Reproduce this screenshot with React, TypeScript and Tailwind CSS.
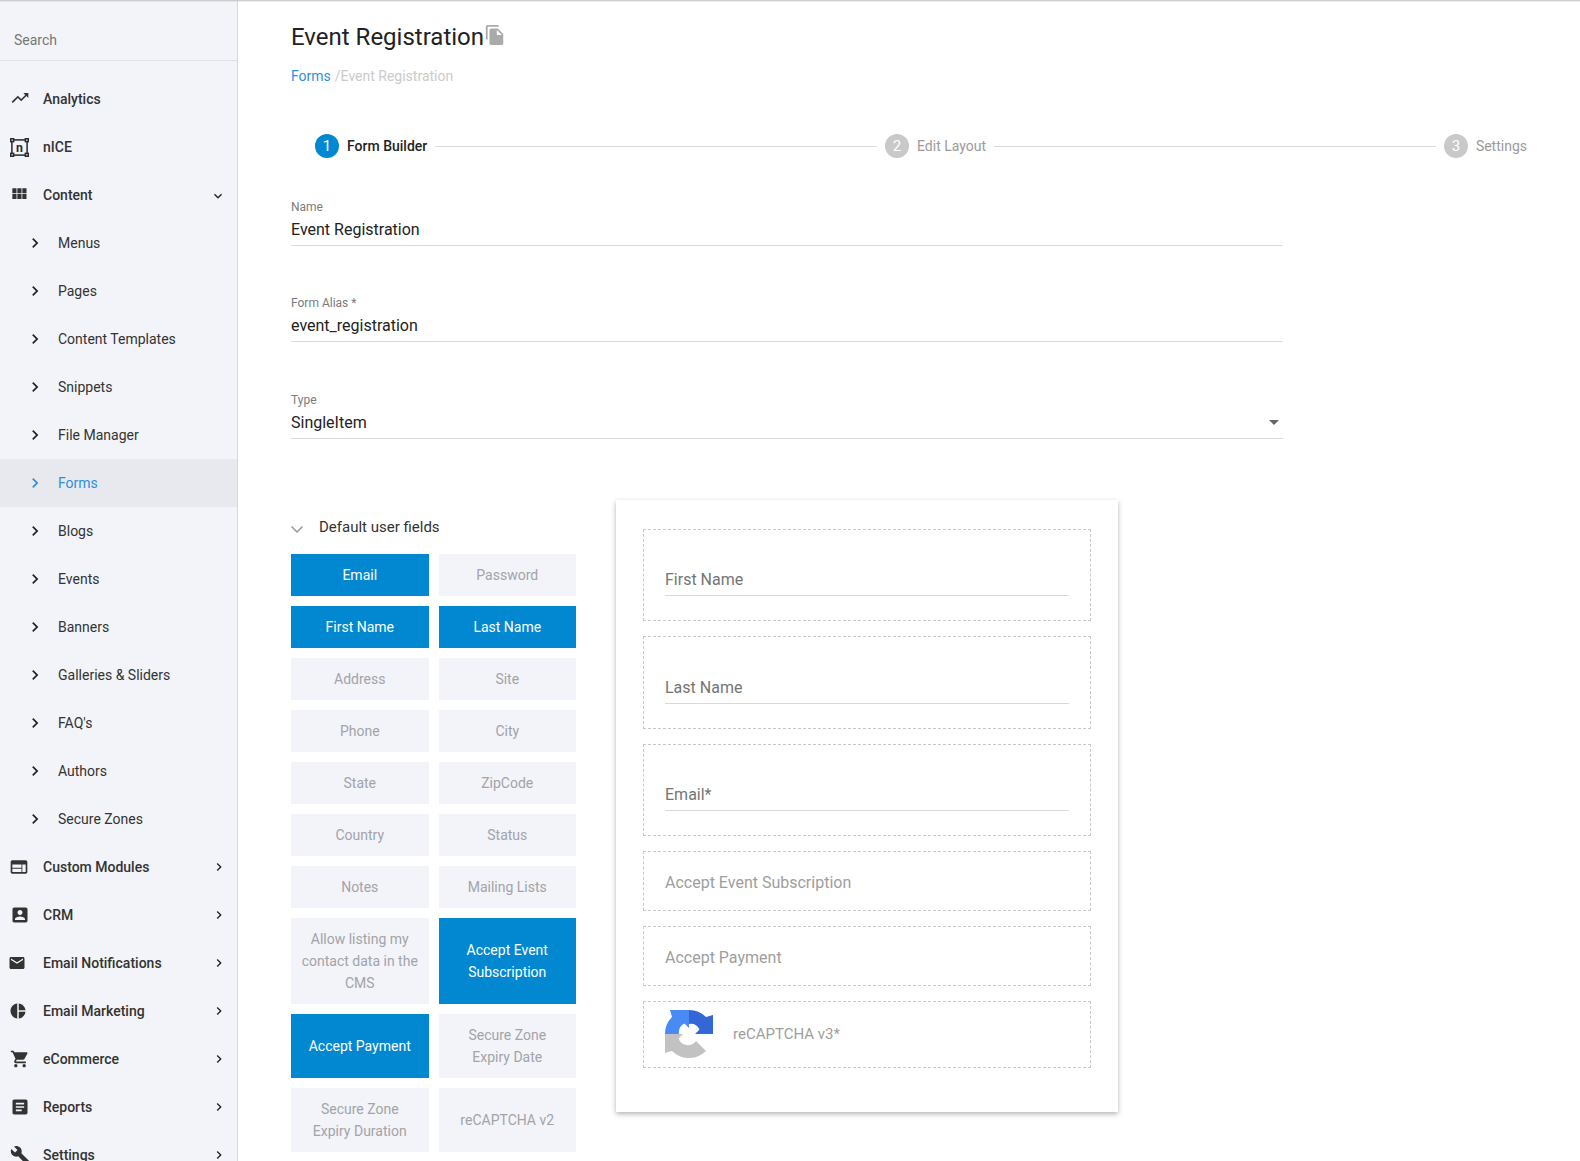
import type { ReactNode } from "react";

const chevronRight = "M10 6L8.59 7.41 13.17 12l-4.58 4.59L10 18l6-6z";
const expandMore = "M16.59 8.59L12 13.17 7.41 8.59 6 10l6 6 6-6z";

function Icon({ d, className }: { d: string; className?: string }) {
  return (
    <svg viewBox="0 0 24 24" fill="currentColor" className={className}>
      <path d={d} />
    </svg>
  );
}

function NiceIcon() {
  return (
    <svg viewBox="0 0 20 20" className="ml-[10px] mr-[14px] size-[19px] shrink-0 text-[#2b2b2b]">
      <rect x="2" y="2" width="16" height="16" fill="none" stroke="currentColor" strokeWidth="1.6" />
      <rect x="0.8" y="0.8" width="3" height="3" fill="#f2f4f9" stroke="currentColor" strokeWidth="1.6" />
      <rect x="16.2" y="0.8" width="3" height="3" fill="#f2f4f9" stroke="currentColor" strokeWidth="1.6" />
      <rect x="0.8" y="16.2" width="3" height="3" fill="#f2f4f9" stroke="currentColor" strokeWidth="1.6" />
      <rect x="16.2" y="16.2" width="3" height="3" fill="#f2f4f9" stroke="currentColor" strokeWidth="1.6" />
      <text x="10" y="14.5" textAnchor="middle" fontSize="13" fontWeight="700" fill="currentColor" fontFamily="Roboto, sans-serif">
        n
      </text>
    </svg>
  );
}

function MainItem({ icon, label, open, leaf }: { icon: ReactNode; label: string; open?: boolean; leaf?: boolean }) {
  return (
    <div className="flex h-12 items-center text-[14px] font-medium text-[#333]">
      {icon}
      <span className="flex-1">{label}</span>
      {!leaf &&
        (open ? (
          <Icon d={expandMore} className="mr-[11px] mt-px size-4 text-[#222]" />
        ) : (
          <Icon d={chevronRight} className="mr-[10px] size-4 text-[#222]" />
        ))}
    </div>
  );
}

function SubItem({ label, active }: { label: string; active?: boolean }) {
  return (
    <div className={`flex h-12 items-center text-[14px] ${active ? "bg-[#e8e9ee] text-[#2f8fdc]" : "text-[#333]"}`}>
      <Icon d={chevronRight} className={`ml-[24.5px] mr-[13.5px] size-5 ${active ? "text-[#2f8fdc]" : "text-[#222]"}`} />
      <span>{label}</span>
    </div>
  );
}

function Sidebar() {
  return (
    <aside className="h-full w-[238px] shrink-0 overflow-hidden border-r border-[#d6d8df] bg-[#f2f4f9]">
      <div className="flex h-[61px] items-center border-b border-[#dfe1e6] pl-[14px] pt-[21px] text-[14px] text-[#777]">Search</div>
      <nav className="pt-[14px]">
        <MainItem label="Analytics" leaf icon={<Icon d="M16 6l2.29 2.29-4.88 4.88-4-4L2 16.59 3.41 18l6-6 4 4 6.3-6.29L22 12V6z" className="mb-[2px] ml-[10px] mr-[13px] size-5 shrink-0" />} />
        <MainItem label="nICE" leaf icon={<NiceIcon />} />
        <MainItem label="Content" open icon={<Icon d="M4 11h5V5H4v6zm0 7h5v-6H4v6zm6 0h5v-6h-5v6zm6 0h5v-6h-5v6zm-6-7h5V5h-5v6zm6-6v6h5V5h-5z" className="ml-[9px] mr-[14px] mb-[2px] size-5 shrink-0" />} />
        {["Menus", "Pages", "Content Templates", "Snippets", "File Manager"].map((l) => (
          <SubItem key={l} label={l} />
        ))}
        <SubItem label="Forms" active />
        {["Blogs", "Events", "Banners", "Galleries & Sliders", "FAQ's", "Authors", "Secure Zones"].map((l) => (
          <SubItem key={l} label={l} />
        ))}
        <MainItem label="Custom Modules" icon={<Icon d="M20 4H4c-1.1 0-1.99.9-1.99 2L2 18c0 1.1.9 2 2 2h16c1.1 0 2-.9 2-2V6c0-1.1-.9-2-2-2zm-5 14H4v-4h11v4zm0-5H4V9h11v4zm5 5h-4V9h4v9z" className="ml-[9px] mr-[14px] size-5 shrink-0" />} />
        <MainItem label="CRM" icon={<Icon d="M3 5v14c0 1.1.89 2 2 2h14c1.1 0 2-.9 2-2V5c0-1.1-.9-2-2-2H5c-1.11 0-2 .9-2 2zm12 4c0 1.66-1.34 3-3 3s-3-1.34-3-3 1.34-3 3-3 3 1.34 3 3zm-9 8c0-2 4-3.1 6-3.1s6 1.1 6 3.1v1H6v-1z" className="ml-[10px] mr-[13px] size-5 shrink-0" />} />
        <MainItem label="Email Notifications" icon={<Icon d="M20 4H4c-1.1 0-1.99.9-1.99 2L2 18c0 1.1.9 2 2 2h16c1.1 0 2-.9 2-2V6c0-1.1-.9-2-2-2zm0 4l-8 5-8-5V6l8 5 8-5v2z" className="ml-[8px] mr-[17px] size-[18px] shrink-0" />} />
        <MainItem label="Email Marketing" icon={<Icon d="M11 2v20c-5.07-.5-9-4.79-9-10s3.93-9.5 9-10zm2.03 0v8.99H22c-.47-4.74-4.24-8.52-8.97-8.99zm0 11.01V22c4.74-.47 8.5-4.25 8.97-8.99h-8.97z" className="ml-[8.5px] mr-[16.5px] size-[18px] shrink-0" />} />
        <MainItem label="eCommerce" icon={<Icon d="M7 18c-1.1 0-1.99.9-1.99 2S5.9 22 7 22s2-.9 2-2-.9-2-2-2zM1 2v2h2l3.6 7.59-1.35 2.45c-.16.28-.25.61-.25.96 0 1.1.9 2 2 2h12v-2H7.42c-.14 0-.25-.11-.25-.25l.03-.12.9-1.63h7.45c.75 0 1.41-.41 1.75-1.03l3.58-6.49c.08-.14.12-.31.12-.48 0-.55-.45-1-1-1H5.21l-.94-2H1zm16 16c-1.1 0-1.99.9-1.99 2s.89 2 1.99 2 2-.9 2-2-.9-2-2-2z" className="ml-[10px] mr-[13px] size-5 shrink-0" />} />
        <MainItem label="Reports" icon={<Icon d="M19 3H5c-1.1 0-2 .9-2 2v14c0 1.1.9 2 2 2h14c1.1 0 2-.9 2-2V5c0-1.1-.9-2-2-2zm-5 14H7v-2h7v2zm3-4H7v-2h10v2zm0-4H7V7h10v2z" className="ml-[10px] mr-[13px] size-5 shrink-0" />} />
        <MainItem label="Settings" icon={<Icon d="M22.7 19l-9.1-9.1c.9-2.3.4-5-1.5-6.9-2-2-5-2.4-7.4-1.3L9 6 6 9 1.6 4.7C.4 7.1.9 10.1 2.9 12.1c1.9 1.9 4.6 2.4 6.9 1.5l9.1 9.1c.4.4 1 .4 1.4 0l2.3-2.3c.5-.4.5-1.1.1-1.4z" className="ml-[10px] mr-[13px] size-5 shrink-0" />} />
      </nav>
    </aside>
  );
}

function Step({ n, label, active }: { n: number; label: string; active?: boolean }) {
  return (
    <div className="flex items-center gap-2">
      <span className={`flex size-6 items-center justify-center rounded-full text-[15px] text-white ${active ? "bg-[#0288d1]" : "bg-[#c9c9c9]"}`}>{n}</span>
      <span className={`text-[14px] ${active ? "font-medium text-[#222]" : "text-[#9a9a9a]"}`}>{label}</span>
    </div>
  );
}

function Field({ label, value, className, select }: { label: string; value: string; className: string; select?: boolean }) {
  return (
    <div className={`w-[992px] border-b border-[#dadada] ${className}`}>
      <div className="h-4 text-[12px] leading-4 text-[#7b7b7b]">{label}</div>
      <div className="flex h-[30px] items-center justify-between text-[16px] text-[#222]">
        <span>{value}</span>
        {select && (
          <svg viewBox="0 0 10 5" className="mb-[2px] mr-1 h-[5px] w-[10px] fill-[#666]">
            <path d="M0 0h10L5 5z" />
          </svg>
        )}
      </div>
    </div>
  );
}

const fields: [string, boolean][] = [
  ["Email", true],
  ["Password", false],
  ["First Name", true],
  ["Last Name", true],
  ["Address", false],
  ["Site", false],
  ["Phone", false],
  ["City", false],
  ["State", false],
  ["ZipCode", false],
  ["Country", false],
  ["Status", false],
  ["Notes", false],
  ["Mailing Lists", false],
  ["Allow listing my contact data in the CMS", false],
  ["Accept Event Subscription", true],
  ["Accept Payment", true],
  ["Secure Zone Expiry Date", false],
  ["Secure Zone Expiry Duration", false],
  ["reCAPTCHA v2", false],
];

function InputBox({ label }: { label: string }) {
  return (
    <div className="mb-[15px] border border-dashed border-[#c8c8c8] px-[21px] pb-6 pt-[38.5px]">
      <div className="border-b border-[#d9d9d9] pb-[3px] text-[16px] leading-6 text-[#757575]">{label}</div>
    </div>
  );
}

function PlainBox({ label }: { label: string }) {
  return (
    <div className="mb-[15.5px] flex h-[59.5px] items-center border border-dashed border-[#c8c8c8] pl-[21px] pt-1 text-[16px] text-[#9e9e9e]">{label}</div>
  );
}

function RecaptchaLogo() {
  return (
    <svg viewBox="0 0 48 48" className="size-12 shrink-0">
      <path fill="#c2c2c2" d="M0 24H18L13.5 28.5A10 10 0 0 0 31 31L41 41A24 24 0 0 1 7 41L0 43Z" />
      <path fill="#4a8af4" d="M0 24A24 24 0 0 1 7 7L5 0H24V18L19.5 13.5A10 10 0 0 0 14 24Z" />
      <path fill="#3367d6" d="M24 0A24 24 0 0 1 41 7L48 5V24H30L34.5 19.5A10 10 0 0 0 24 14Z" />
    </svg>
  );
}

export default function App() {
  return (
    <div className="relative flex h-screen w-full overflow-hidden bg-white font-['Roboto',sans-serif]">
      <div className="absolute inset-x-0 top-0 z-10 h-[2px] bg-gradient-to-b from-[#bdbdbd] to-transparent" />
      <Sidebar />
      <main className="min-w-0 flex-1 pl-[53px] pr-[29px]">
        <div className="flex pt-[23px]">
          <h1 className="text-[24px] leading-7 text-[#222]">Event Registration</h1>
          <Icon d="M16 1H4c-1.1 0-2 .9-2 2v14h2V3h12V1zm-1 4l6 6v10c0 1.1-.9 2-2 2H7.99C6.89 23 6 22.1 6 21l.01-14c0-1.1.89-2 1.99-2h7zm-1 7h5.5L14 6.5V12z" className="mt-px size-[22px] text-[#aaa]" />
        </div>
        <div className="mt-[15px] flex h-5 items-center gap-1 text-[14px]">
          <span className="text-[#2f8fdc]">Forms</span>
          <span className="text-[#cbcbcb]">/Event Registration</span>
        </div>
        <div className="mt-12 flex items-center px-6">
          <Step n={1} label="Form Builder" active />
          <div className="mx-2 h-px flex-1 bg-[#d9d9d9]" />
          <Step n={2} label="Edit Layout" />
          <div className="mx-2 h-px flex-1 bg-[#d9d9d9]" />
          <Step n={3} label="Settings" />
        </div>
        <Field label="Name" value="Event Registration" className="mt-[41px]" />
        <Field label="Form Alias *" value="event_registration" className="mt-[49px]" />
        <Field label="Type" value="SingleItem" className="mt-[50px]" select />
        <div className="mt-[61px] flex items-start gap-10">
          <div className="w-[285px] shrink-0 pt-[17px]">
            <div className="flex h-5 items-center gap-4 text-[15px] text-[#333]">
              <svg viewBox="0 0 12 7" className="mt-1 h-[7px] w-3 fill-none stroke-[#999] stroke-[1.5]">
                <path d="M.5.5L6 6 11.5.5" />
              </svg>
              Default user fields
            </div>
            <div className="mt-[17px] grid grid-cols-2 gap-[10px]">
              {fields.map(([label, on]) => (
                <div key={label} className={`flex items-center justify-center p-[10px] text-center text-[14px] leading-[22px] ${on ? "bg-[#0288d1] text-white" : "bg-[#f2f4f9] text-[#a3a3a8]"}`}>
                  {label}
                </div>
              ))}
            </div>
          </div>
          <div className="h-[612px] w-[502px] bg-white px-[27px] pt-[28.9px] shadow-[0_2px_5px_rgba(0,0,0,0.3)]">
            <InputBox label="First Name" />
            <InputBox label="Last Name" />
            <InputBox label="Email*" />
            <PlainBox label="Accept Event Subscription" />
            <PlainBox label="Accept Payment" />
            <div className="flex h-[67px] items-center gap-5 border border-dashed border-[#c8c8c8] pb-[2px] pl-[21px] text-[15px] text-[#9e9e9e]">
              <RecaptchaLogo />
              reCAPTCHA v3*
            </div>
          </div>
        </div>
      </main>
    </div>
  );
}
